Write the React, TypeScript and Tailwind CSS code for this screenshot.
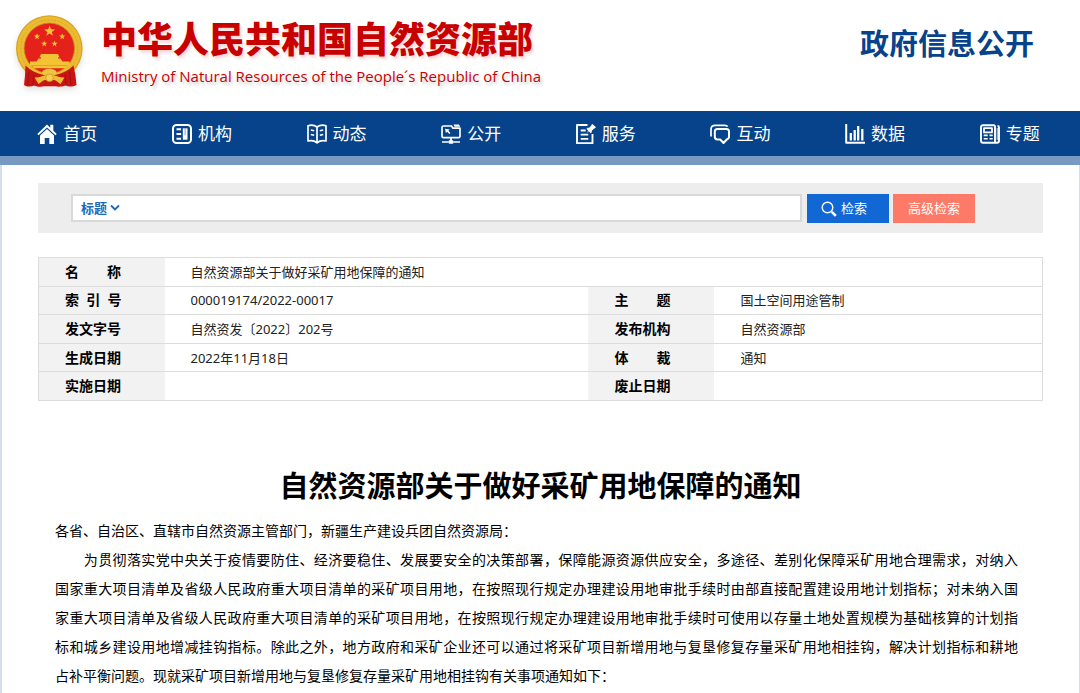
import React from 'react'

const EMBLEM_STAR = 'M0-5 1.2-1.6 4.8-1.5 1.9.6 2.9 4 0 2-2.9 4-1.9.6-4.8-1.5-1.2-1.6Z'

function Emblem() {
    return (
        <svg viewBox="14 12 74 80" className="w-[74px] h-20 shrink-0 drop-shadow-md" aria-label="国徽" role="img">
            <circle cx="49.3" cy="48.5" r="33.3" fill="#d9a520" />
            <circle cx="49.3" cy="48.5" r="32" fill="#ecbb34" />
            <circle cx="49.3" cy="48.5" r="28.6" fill="none" stroke="#dba824" strokeWidth="1" strokeDasharray="2 1.4" />
            <circle cx="49.3" cy="48.3" r="25.2" fill="#e5211b" stroke="#c98f14" strokeWidth="0.8" />
            <g fill="#f3c335">
                <path d={EMBLEM_STAR} transform="translate(49.6 31.2) scale(1.15)" />
                <path d={EMBLEM_STAR} transform="translate(37 36.6) scale(0.65)" />
                <path d={EMBLEM_STAR} transform="translate(62.2 36.6) scale(0.65)" />
                <path d={EMBLEM_STAR} transform="translate(44.2 43.8) scale(0.65)" />
                <path d={EMBLEM_STAR} transform="translate(54.6 43.8) scale(0.65)" />
                <path d="M41 54h17l1.5 3.2h-20ZM41 57.2h17v1.3h-17ZM38.5 58.5h22l2 3h-26ZM30 61.5h39.5v4.3H30ZM32 66h35.500l-2 2.200H34Z" />
            </g>
            <path d="M25.500 65.500c5 5 11 8 18 9.500h12c7-1.500 13-4.500 18-9.500l2 10 1 9.500c-4 2-8 2-11 .5-4 1.500-8 1.300-10 .8H44c-3 .8-7 .5-10-.8-3 1.500-7 1.500-10-.5l1-9.500Z" fill="#c91414" />
            <path d="M29 71.500 27.500 85M34 75l-1 10M69.500 71.500 71 85M65 75l1 10" stroke="#a50d0d" strokeWidth="1" fill="none" />
            <path d="M42.500 71.500c1-2.200 3-1.500 3.500-2.200 1-1 2.300-.3 3.300-.8 1 .5 2.300-.2 3.300.8.6.7 2.600 0 3.600 2.200 1 1 0 2.500-1 2.500H43.500c-1 0-2-1.500-1-2.500Z" fill="#f0c440" />
            <path d="M34.500 77.500c5 .2 8-1.500 11-2.500h8c3 1 6 2.700 11 2.500l-4 6.500c-2-1-4-3.500-6-4h-10c-2 .5-4 3-6 4Z" fill="#efbd35" />
            <circle cx="49.500" cy="77.800" r="3.800" fill="#f5cf55" stroke="#c98f14" strokeWidth="0.7" />
        </svg>
    )
}

const icons = {
    home: (
        <>
            <path d="M10 .6 13.300 3.700V.8h3v5.700l3.400 3.400-1.300 1.400L10 3.400 1.600 11.300.3 9.900Z" fill="currentColor" />
            <path d="M10 5 17 11.500V20h-4.700v-6H7.700v6H3v-8.500Z" fill="currentColor" />
        </>
    ),
    org: (
        <>
            <rect x="1" y="1" width="18" height="18" rx="3.500" strokeWidth="2" />
            <path d="M4.500 5.200h4.600M4.500 10h4.600M4.500 14.800h4.600" strokeWidth="2" />
            <path d="M10.800 4.300h4.700v11.400h-4.700Z" fill="currentColor" />
            <path d="M13.100 4.300v7" stroke="#06438a" strokeWidth="0.500" />
        </>
    ),
    book: (
        <>
            <path d="M10 3C7 .8 4 .8 1 1.800V17c3-.8 6-.8 9 1.800 3-2.600 6-2.600 9-1.800V1.800C16 .8 13 .8 10 3ZM10 3v15.500" strokeWidth="1.700" />
            <path d="m3.800 6 3.400.8M3.800 10.500l3.400.8M16.200 6l-3.400.8M16.200 10.500l-3.400.8" strokeWidth="1.600" />
        </>
    ),
    open: (
        <>
            <path d="M11 2H2.500Q1 2 1 3.500v8.700q0 1.500 1.500 1.500h15q1.500 0 1.500-1.500V3.500M10.500 2 12 4.200h6.800M10 14v3M1 18h6.500M12.500 18H19" strokeWidth="1.700" />
            <path d="M12.500.6H18l1.200 2.200h-5.700ZM4 4.800l4.600.6-1.200 1.300 2 2.200-1.100 1-2-2.200-1.400 1.400Z" fill="currentColor" />
            <rect x="7.500" y="16.200" width="5" height="3.600" rx="1.200" fill="currentColor" />
        </>
    ),
    service: (
        <>
            <path d="M11.500 1H1v18.200h15.500V10" strokeWidth="1.900" />
            <path d="M4.700 6.500h5M4.700 10.700h7.600M4.700 14.900h7.600" strokeWidth="1.800" />
            <path d="M16.500 0 20 3.300l-1.300 1.300-.6-.2-2.300 2.300v1.600l-1.100 1-2-2-2 1.800 1.500-2.500-1.700-1.700 1-1.100h1.600l2.300-2.200-.2-.5Z" fill="currentColor" />
        </>
    ),
    chat: (
        <>
            <path d="M1 12.500V5.500Q1 1.300 5.200 1.300h9.500q2 0 3 1.200" strokeWidth="1.700" />
            <path d="M7.500 5h9Q19 5 19 7.500v5Q19 15 17 15.200L13.500 19 10.200 15.500H7.500Q4.800 15.500 4.800 12.500v-5Q4.800 5 7.500 5Z" strokeWidth="2" />
        </>
    ),
    chart: (
        <>
            <path d="M1.200 0v18.700H20.500" strokeWidth="2" />
            <path d="M5.800 9v7.500M9.700 6v10.500M13.200 2v14.500M17.300 5v11.500" strokeWidth="2.300" />
        </>
    ),
    news: (
        <>
            <path d="M14.800 1.200H3Q1 1.200 1 3.200v13.600q0 2 2 2h14q2 0 2-2V3.500q0-1.500-1.500-1.500M15 1.200v15.500q0 2 1.500 2" strokeWidth="1.900" />
            <path d="M17.200 4v12" strokeWidth="0.900" />
            <path d="M4 4.200h8v4.200H4Z" strokeWidth="1.800" />
            <path d="M3.700 11.400h4M9.500 11.400h3.200M3.700 14.800h4M9.500 14.800h3.200" strokeWidth="1.600" />
        </>
    ),
}

const navItems: { label: string; icon: keyof typeof icons }[] = [
    { label: '首页', icon: 'home' },
    { label: '机构', icon: 'org' },
    { label: '动态', icon: 'book' },
    { label: '公开', icon: 'open' },
    { label: '服务', icon: 'service' },
    { label: '互动', icon: 'chat' },
    { label: '数据', icon: 'chart' },
    { label: '专题', icon: 'news' },
]

const rows = [
    ['索\u00a0\u00a0引\u00a0\u00a0号', '000019174/2022-00017', '主\u3000\u3000题', '国土空间用途管制'],
    ['发文字号', '自然资发〔2022〕202号', '发布机构', '自然资源部'],
    ['生成日期', '2022年11月18日', '体\u3000\u3000裁', '通知'],
    ['实施日期', '', '废止日期', ''],
]

// full lines are justified to the column, the last one is left ragged
const paragraph = [
    '\u3000\u3000为贯彻落实党中央关于疫情要防住、经济要稳住、发展要安全的决策部署，保障能源资源供应安全，多途径、差别化保障采矿用地合理需求，对纳入',
    '国家重大项目清单及省级人民政府重大项目清单的采矿项目用地，在按照现行规定办理建设用地审批手续时由部直接配置建设用地计划指标；对未纳入国',
    '家重大项目清单及省级人民政府重大项目清单的采矿项目用地，在按照现行规定办理建设用地审批手续时可使用以存量土地处置规模为基础核算的计划指',
    '标和城乡建设用地增减挂钩指标。除此之外，地方政府和采矿企业还可以通过将采矿项目新增用地与复垦修复存量采矿用地相挂钩，解决计划指标和耕地',
]

function Header() {
    return (
        <header className="flex items-start justify-between bg-white h-[111px] pl-[14px] pr-[46px]">
            <a href="#" className="flex items-start gap-[13px] pt-3">
                <Emblem />
                <span className="flex flex-col text-[#c80000]">
                    <span className="text-4xl leading-[56px] font-black [text-shadow:2px_3px_3px_rgba(200,0,0,0.15)]">
                        中华人民共和国自然资源部
                    </span>
                    <span className="font-['Open_Sans','Noto_Sans',sans-serif] text-[15px] leading-4 [text-shadow:2px_3px_3px_rgba(0,0,0,0.2)]">
                        Ministry of Natural Resources of the People´s Republic of China
                    </span>
                </span>
            </a>
            <a href="#" className="pt-6 text-[29px] leading-10 font-bold text-[#06438a]">政府信息公开</a>
        </header>
    )
}

function Nav() {
    return (
        <nav className="grid grid-cols-8 h-[54px] pr-[3px] bg-[#06438a] border-b-[9px] border-[#7799c2]">
            {navItems.map((item) => (
                <a key={item.label} href="#" className="flex items-center justify-center gap-[6px] text-white">
                    <svg viewBox="0 0 20 20" className="size-5 shrink-0" fill="none" stroke="currentColor" strokeWidth="0" strokeLinejoin="round" aria-hidden="true">
                        {icons[item.icon]}
                    </svg>
                    <span className="text-[17px] leading-6">{item.label}</span>
                </a>
            ))}
        </nav>
    )
}

function SearchBar() {
    return (
        <form className="flex items-start gap-1 h-[50px] bg-[#ededed] pt-[11px] pl-[33px] pr-[68px]" onSubmit={(e) => e.preventDefault()}>
            <div className="flex flex-1 items-center h-7 mr-[1px] pl-2 border-2 border-[#d9d9d9] bg-white">
                <select aria-label="检索范围" className="appearance-none bg-transparent text-[13px] leading-5 font-bold text-[#1a6ab8] outline-none">
                    <option>标题</option>
                </select>
                <svg viewBox="0 0 10 8" className="w-[10px] h-2 ml-[2px]" fill="none" stroke="#1a6ab8" strokeWidth="1.8" aria-hidden="true">
                    <path d="M1 1.500 5 5.500 9 1.500" />
                </svg>
                <input type="text" aria-label="检索词" className="flex-1 min-w-0 h-full px-2 text-[13px] outline-none" />
            </div>
            <button type="submit" className="flex items-center justify-center gap-1 w-[82px] h-[29px] pr-2 bg-[#1168d4] text-[13px] text-white">
                <svg viewBox="0 0 16 16" className="size-4" fill="none" stroke="currentColor" aria-hidden="true">
                    <circle cx="6.500" cy="6.500" r="5.300" strokeWidth="1.400" />
                    <path d="m10.800 10.800 4 4" strokeWidth="2.600" />
                </svg>
                检索
            </button>
            <button type="button" className="w-[82px] h-[29px] bg-[#fd7a68] text-[13px] text-white">高级检索</button>
        </form>
    )
}

function InfoTable() {
    const th = 'bg-[#f2f2f2] pl-[26px] text-left text-sm leading-5 font-bold text-black'
    const td = 'pl-[26px] text-[13px] leading-5 text-[#222]'
    return (
        <table className="w-full h-36 mt-6 table-fixed border-collapse border border-[#dcdcdc]">
            <colgroup>
                <col className="w-[126px]" />
                <col />
                <col className="w-[126px]" />
                <col className="w-[328px]" />
            </colgroup>
            <tbody>
                <tr>
                    <th scope="row" className={th}>{'名\u3000\u3000称'}</th>
                    <td colSpan={3} className={td}>自然资源部关于做好采矿用地保障的通知</td>
                </tr>
                {rows.map(([l1, v1, l2, v2]) => (
                    <tr key={l1} className="border-t border-[#dcdcdc]">
                        <th scope="row" className={th}>{l1}</th>
                        <td className={td}>{v1}</td>
                        <th scope="row" className={th}>{l2}</th>
                        <td className={td}>{v2}</td>
                    </tr>
                ))}
            </tbody>
        </table>
    )
}

export default function App() {
    return (
        <div lang="zh-CN" className="bg-white font-['Noto_Sans','Noto_Sans_CJK_SC',sans-serif]">
            <Header />
            <Nav />
            <main className="border-l-2 border-r border-[#d5dfeb] bg-white pt-[18px] px-9">
                <SearchBar />
                <InfoTable />
                <article className="pt-16 pb-[3px] text-black">
                    <h1 className="text-center text-[29px] leading-[42px] font-bold">自然资源部关于做好采矿用地保障的通知</h1>
                    <div className="pt-[9px] pl-[17px] pr-[25px] text-sm leading-[29px]">
                        <p>各省、自治区、直辖市自然资源主管部门，新疆生产建设兵团自然资源局：</p>
                        <p>
                            {paragraph.map((line) => (
                                <span key={line} className="block [text-align-last:justify]">{line}</span>
                            ))}
                            占补平衡问题。现就采矿项目新增用地与复垦修复存量采矿用地相挂钩有关事项通知如下：
                        </p>
                    </div>
                </article>
            </main>
        </div>
    )
}
